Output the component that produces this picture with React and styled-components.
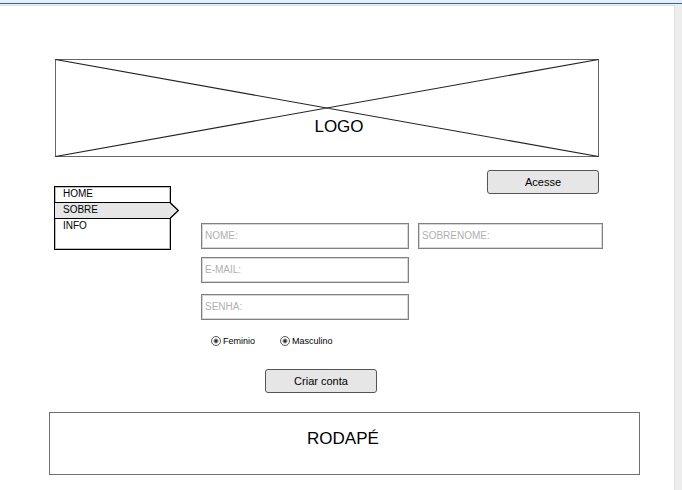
import React from "react";
import styled, { createGlobalStyle } from "styled-components";

const GlobalStyle = createGlobalStyle`
  *, *::before, *::after { box-sizing: border-box; }
  html, body, #root { height: 100%; }
  body {
    margin: 0;
    background: #ededed;
    color: #000;
    font-family: "Liberation Sans", Arial, sans-serif;
  }
  button, input { font-family: inherit; color: inherit; }
`;

const Screen = styled.div`
  min-height: 100%;
  display: flex;
  flex-direction: column;
`;

const TopEdge = styled.div`
  height: 5px;
  border-top: 3px solid #ededed;
  background: linear-gradient(#0f6cd6 1px, #ededed 1px);
`;

const Sheet = styled.div`
  flex: 1;
  margin-right: 7px;
  padding: 53px 34px 14px 49px;
  border-top: 1px solid #e0e0e0;
  border-right: 1px solid #e0e0e0;
  background: #fff;
`;

const LogoBox = styled.header`
  display: grid;
  height: 98px;
  margin: 0 41px 0 6px;
`;

const Cross = styled.svg`
  grid-area: 1 / 1;
  width: 100%;
  height: 98px;
`;

const LogoText = styled.h1`
  grid-area: 1 / 1;
  place-self: end center;
  margin: 0 0 20px 24px;
  font-size: 17px;
  line-height: 20px;
  font-weight: 400;
`;

const Middle = styled.div`
  display: grid;
  grid-template-columns: 117px 1fr;
  column-gap: 30px;
  align-items: start;
  padding: 13px 37px 0 5px;
`;

const Menu = styled.nav`
  display: flex;
  flex-direction: column;
  height: 64px;
  margin-top: 16px;
  border: 1px solid #000;
  outline: 1px solid #bbb;
  outline-offset: -2px;
`;

const MenuLink = styled.a`
  display: block;
  height: 15px;
  padding-left: 8px;
  font-size: 10px;
  line-height: 13px;
  color: #000;
  text-decoration: none;
`;

const ActiveItem = styled.div`
  position: relative;
  height: 17px;
  border: solid #000;
  border-width: 1px 0;
  background: #e6e6e6;
`;

const Arrow = styled.svg`
  position: absolute;
  left: 100%;
  top: -1px;
`;

const Content = styled.div`
  display: flex;
  flex-direction: column;
`;

const Button = styled.button`
  width: 112px;
  height: 24px;
  padding: 0;
  border: 1px solid #555;
  border-radius: 3px;
  background: #e6e6e6;
  font-size: 11px;
  line-height: 22px;
`;

const AccessButton = styled(Button)`
  align-self: flex-end;
  margin-right: 4px;
`;

const Form = styled.form`
  display: flex;
  flex-direction: column;
  margin-top: 29px;
`;

const FieldGrid = styled.div`
  display: grid;
  grid-template-columns: 208fr 185fr;
  gap: 8px 9px;
`;

const Field = styled.input`
  width: 100%;
  height: 26px;
  padding: 0 3px 2px;
  border: 1px solid #808080;
  outline: 1px solid #d6d6d6;
  outline-offset: -2px;
  border-radius: 0;
  background: #fff;
  font-size: 10px;
  &::placeholder { color: #b0b0b0; opacity: 1; }
`;

const FirstColumnField = styled(Field)`
  grid-column: 1;
`;

const PasswordField = styled(FirstColumnField)`
  margin-top: 3px;
`;

const Choices = styled.div`
  display: flex;
  gap: 25px;
  margin: 14px 0 0 10px;
`;

const Choice = styled.label`
  display: flex;
  align-items: center;
  gap: 2px;
  height: 14px;
  font-size: 9px;
  line-height: 14px;
`;

const Radio = styled.input`
  appearance: none;
  width: 10px;
  height: 10px;
  margin: 0;
  border: 1px solid #555;
  border-radius: 50%;
  background: radial-gradient(circle, #333 1px, #fff 3px);
`;

const SubmitButton = styled(Button)`
  margin: 21px 0 0 64px;
`;

const Footer = styled.footer`
  display: grid;
  place-items: center;
  height: 63px;
  margin-top: 19px;
  padding: 0 3px 9px 0;
  border: 1px solid #707070;
  font-size: 17px;
  line-height: 20px;
`;

const menuItems = ["HOME", "SOBRE", "INFO"];

export default function App() {
  return (
    <>
      <GlobalStyle />
      <Screen>
        <TopEdge />
        <Sheet>
          <LogoBox>
            <Cross viewBox="0 0 544 98" preserveAspectRatio="none" fill="none" stroke="#222" aria-hidden="true">
              <rect x="0.5" y="0.5" width="543" height="97" stroke="#666" />
              <path d="M.5 .5 543.5 97.5M.5 97.5 543.5 .5" strokeWidth="1.1" />
            </Cross>
            <LogoText>LOGO</LogoText>
          </LogoBox>
          <Middle>
            <Menu>
              {menuItems.map((item) =>
                item === "SOBRE" ? (
                  <ActiveItem key={item}>
                    <MenuLink href="#sobre" aria-current="page">{item}</MenuLink>
                    <Arrow width="9" height="17" viewBox="0 0 9 17" aria-hidden="true">
                      <path d="M0 .5 8.3 8.5 0 16.5" fill="#e6e6e6" stroke="#000" strokeWidth="1.3" />
                    </Arrow>
                  </ActiveItem>
                ) : (
                  <MenuLink key={item} href={`#${item.toLowerCase()}`}>{item}</MenuLink>
                )
              )}
            </Menu>
            <Content>
              <AccessButton type="button">Acesse</AccessButton>
              <Form onSubmit={(event) => event.preventDefault()}>
                <FieldGrid>
                  <Field type="text" name="nome" aria-label="Nome" placeholder="NOME:" />
                  <Field type="text" name="sobrenome" aria-label="Sobrenome" placeholder="SOBRENOME:" />
                  <FirstColumnField type="email" name="email" aria-label="E-mail" placeholder="E-MAIL:" />
                  <PasswordField type="password" name="senha" aria-label="Senha" placeholder="SENHA:" />
                </FieldGrid>
                <Choices>
                  <Choice><Radio type="radio" name="feminino" defaultChecked />Feminio</Choice>
                  <Choice><Radio type="radio" name="masculino" defaultChecked />Masculino</Choice>
                </Choices>
                <SubmitButton type="submit">Criar conta</SubmitButton>
              </Form>
            </Content>
          </Middle>
          <Footer>RODAPÉ</Footer>
        </Sheet>
      </Screen>
    </>
  );
}
